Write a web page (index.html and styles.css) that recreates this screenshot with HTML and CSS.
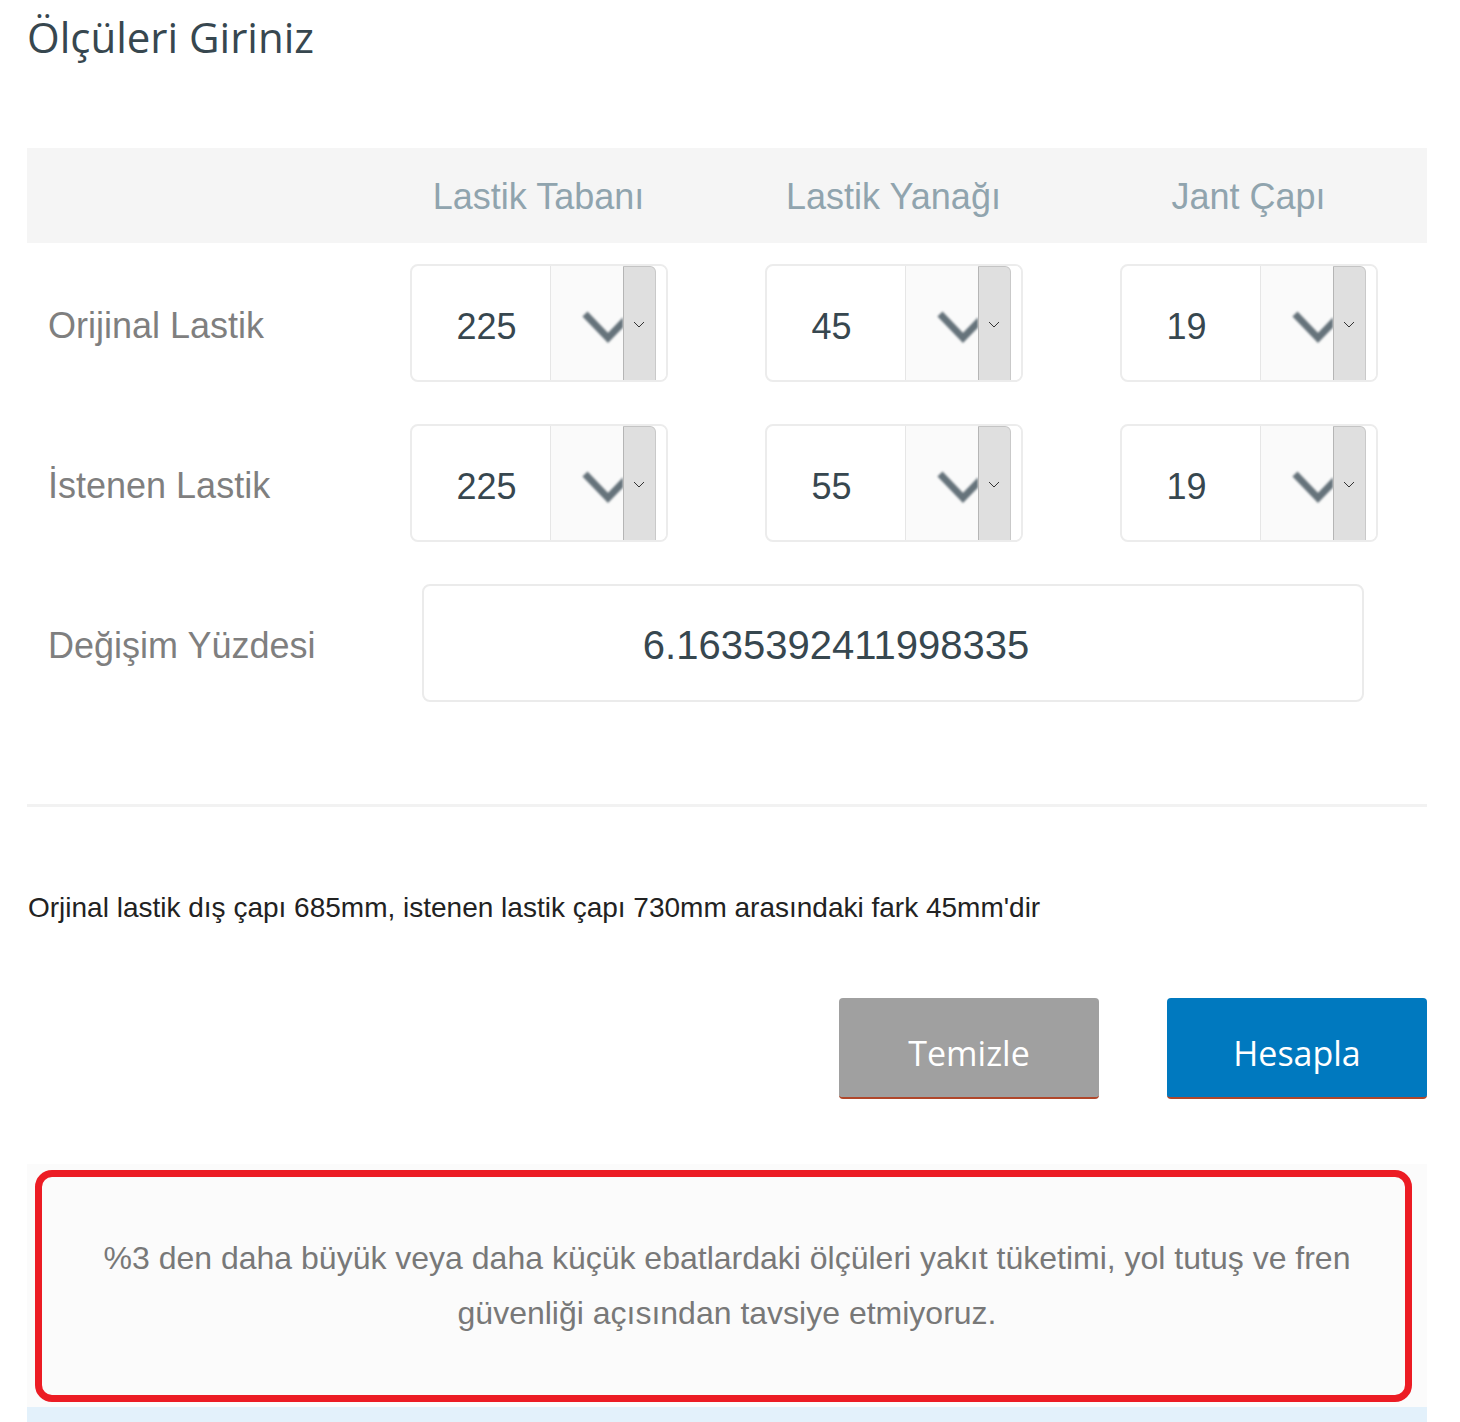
FILE: index.html
```html
<!DOCTYPE html>
<html lang="tr">
<head>
<meta charset="utf-8">
<title>Ölçüleri Giriniz</title>
<link rel="stylesheet" href="styles.css">
</head>
<body>
<div class="page">
  <h1 class="title">Ölçüleri Giriniz</h1>

  <div class="calc">
    <div class="thead">
      <div class="th"></div>
      <div class="th">Lastik Tabanı</div>
      <div class="th">Lastik Yanağı</div>
      <div class="th">Jant Çapı</div>
    </div>

    <div class="row">
      <div class="label">Orijinal Lastik</div>
      <div class="cell">
        <div class="select">
          <span class="val">225</span>
          <span class="deco"><svg class="big" width="72" height="114" viewBox="0 0 72 114"><polyline points="34,48 57,72 80,48" fill="none" stroke="#66737b" stroke-width="7"/></svg></span>
          <span class="native"><svg width="12" height="7" viewBox="0 0 12 7"><polyline points="1,1 6,6 11,1" fill="none" stroke="#333" stroke-width="1"/></svg></span>
          <span class="rest"></span>
        </div>
      </div>
      <div class="cell">
        <div class="select">
          <span class="val">45</span>
          <span class="deco"><svg class="big" width="72" height="114" viewBox="0 0 72 114"><polyline points="34,48 57,72 80,48" fill="none" stroke="#66737b" stroke-width="7"/></svg></span>
          <span class="native"><svg width="12" height="7" viewBox="0 0 12 7"><polyline points="1,1 6,6 11,1" fill="none" stroke="#333" stroke-width="1"/></svg></span>
          <span class="rest"></span>
        </div>
      </div>
      <div class="cell">
        <div class="select">
          <span class="val">19</span>
          <span class="deco"><svg class="big" width="72" height="114" viewBox="0 0 72 114"><polyline points="34,48 57,72 80,48" fill="none" stroke="#66737b" stroke-width="7"/></svg></span>
          <span class="native"><svg width="12" height="7" viewBox="0 0 12 7"><polyline points="1,1 6,6 11,1" fill="none" stroke="#333" stroke-width="1"/></svg></span>
          <span class="rest"></span>
        </div>
      </div>
    </div>

    <div class="row">
      <div class="label">İstenen Lastik</div>
      <div class="cell">
        <div class="select">
          <span class="val">225</span>
          <span class="deco"><svg class="big" width="72" height="114" viewBox="0 0 72 114"><polyline points="34,48 57,72 80,48" fill="none" stroke="#66737b" stroke-width="7"/></svg></span>
          <span class="native"><svg width="12" height="7" viewBox="0 0 12 7"><polyline points="1,1 6,6 11,1" fill="none" stroke="#333" stroke-width="1"/></svg></span>
          <span class="rest"></span>
        </div>
      </div>
      <div class="cell">
        <div class="select">
          <span class="val">55</span>
          <span class="deco"><svg class="big" width="72" height="114" viewBox="0 0 72 114"><polyline points="34,48 57,72 80,48" fill="none" stroke="#66737b" stroke-width="7"/></svg></span>
          <span class="native"><svg width="12" height="7" viewBox="0 0 12 7"><polyline points="1,1 6,6 11,1" fill="none" stroke="#333" stroke-width="1"/></svg></span>
          <span class="rest"></span>
        </div>
      </div>
      <div class="cell">
        <div class="select">
          <span class="val">19</span>
          <span class="deco"><svg class="big" width="72" height="114" viewBox="0 0 72 114"><polyline points="34,48 57,72 80,48" fill="none" stroke="#66737b" stroke-width="7"/></svg></span>
          <span class="native"><svg width="12" height="7" viewBox="0 0 12 7"><polyline points="1,1 6,6 11,1" fill="none" stroke="#333" stroke-width="1"/></svg></span>
          <span class="rest"></span>
        </div>
      </div>
    </div>

    <div class="row">
      <div class="label">Değişim Yüzdesi</div>
      <div class="result-cell">
        <div class="result">6.1635392411998335</div>
      </div>
    </div>
  </div>

  <div class="sep"></div>

  <p class="info">Orjinal lastik dış çapı 685mm, istenen lastik çapı 730mm arasındaki fark 45mm'dir</p>

  <div class="actions">
    <button class="btn btn-clear" type="button">Temizle</button>
    <button class="btn btn-calc" type="button">Hesapla</button>
  </div>

  <div class="notice">
    <p class="notice-text">%3 den daha büyük veya daha küçük ebatlardaki ölçüleri yakıt tüketimi, yol tutuş ve fren güvenliği açısından tavsiye etmiyoruz.</p>
  </div>
  <div class="strip"></div>
</div>
</body>
</html>
```

FILE: styles.css
```css
* { box-sizing: border-box; }

html, body {
  margin: 0;
  padding: 0;
  background: #ffffff;
}

body {
  font-family: "Liberation Sans", Arial, sans-serif;
  overflow: hidden;
}

.page {
  width: 1400px;
  margin-left: 27px;
}

.title {
  margin: 9px 0 0 0;
  font-family: "Open Sans", "Noto Sans", sans-serif;
  font-weight: 400;
  font-size: 42px;
  line-height: 56px;
  color: #37474f;
}

.calc {
  margin-top: 83px;
}

.thead,
.row {
  display: grid;
  grid-template-columns: 334px 355px 355px 355px;
}

.thead {
  height: 95px;
  background: #f5f5f5;
}

.th {
  display: flex;
  align-items: center;
  justify-content: center;
  font-size: 36px;
  color: #90a4ae;
  padding-top: 2px;
}

.row {
  height: 160px;
  align-items: center;
}

.label {
  padding-left: 21px;
  padding-top: 5px;
  font-size: 36px;
  color: #7f7f7f;
}

.cell {
  display: flex;
  justify-content: center;
}

.select {
  display: flex;
  width: 258px;
  height: 118px;
  border: 2px solid #ececec;
  border-radius: 8px;
  overflow: hidden;
  background: #ffffff;
}

.val {
  flex: 0 0 138px;
  display: flex;
  align-items: center;
  padding-left: 45px;
  padding-top: 7px;
  font-size: 36px;
  color: #37474f;
}

.deco {
  flex: 0 0 73px;
  background: #fafafa;
  border-left: 1px solid #e6e6e6;
  overflow: hidden;
  display: block;
}

.big {
  display: block;
  filter: blur(0.8px);
}

.native {
  flex: 0 0 33px;
  background: #dfdfdf;
  border-left: 1px solid #b5b5b5;
  border-top: 1px solid #c4c4c4;
  border-right: 1px solid #c9c9c9;
  border-top-right-radius: 6px;
  display: flex;
  align-items: center;
  justify-content: center;
  padding-top: 2px;
}

.native svg {
  display: block;
}

.rest {
  flex: 1 1 auto;
  background: #ffffff;
}

.result-cell {
  grid-column: 2 / 5;
  padding: 0 62px 0 61px;
}

.result {
  height: 118px;
  border: 2px solid #ebebeb;
  border-radius: 8px;
  display: flex;
  align-items: center;
  justify-content: center;
  padding-right: 114px;
  padding-top: 4px;
  font-size: 40px;
  color: #37474f;
}

.sep {
  margin-top: 81px;
  height: 3px;
  background: #f2f2f2;
}

.info {
  margin: 85px 0 0 1px;
  font-size: 28px;
  line-height: 32px;
  color: #222222;
}

.actions {
  margin-top: 74px;
  display: flex;
  justify-content: flex-end;
  gap: 68px;
}

.btn {
  width: 260px;
  height: 101px;
  border: 0;
  border-bottom: 2px solid #b0472b;
  border-radius: 4px;
  font-family: "Open Sans", "Noto Sans", sans-serif;
  font-size: 34px;
  color: #ffffff;
  padding: 10px 0 0 0;
  margin: 0;
}

.btn-clear {
  background: #a0a0a0;
}

.btn-calc {
  background: #0079bf;
}

.notice {
  position: relative;
  margin-top: 65px;
  height: 243px;
  background: #fbfbfb;
  display: flex;
  align-items: center;
  justify-content: center;
}

.notice::after {
  content: "";
  position: absolute;
  left: 8px;
  right: 15px;
  top: 6px;
  bottom: 5px;
  border: 7px solid #ec1c24;
  border-radius: 17px;
  pointer-events: none;
}

.notice-text {
  margin: 0;
  width: 1270px;
  text-align: center;
  font-size: 32px;
  line-height: 55px;
  color: #787878;
  padding-top: 1px;
}

.strip {
  height: 30px;
  background: #e3f1fb;
}
```
